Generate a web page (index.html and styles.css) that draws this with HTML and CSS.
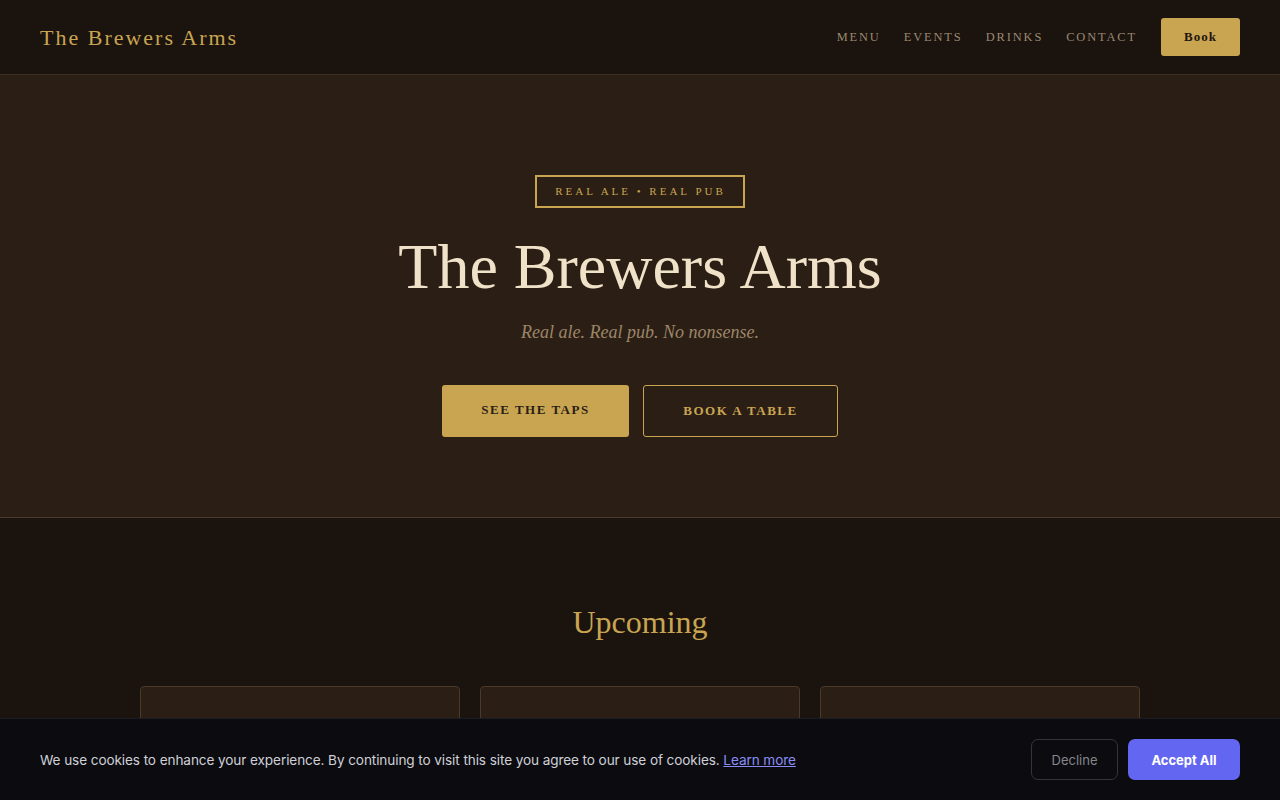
FILE: index.html
```html
<!DOCTYPE html>
<html lang="en">
<head>
<meta charset="utf-8">
<title>The Brewers Arms</title>
<link rel="stylesheet" href="styles.css">
</head>
<body>
<header class="site-header">
  <a class="logo" href="#">The Brewers Arms</a>
  <nav class="nav">
    <a href="#">MENU</a>
    <a href="#">EVENTS</a>
    <a href="#">DRINKS</a>
    <a href="#">CONTACT</a>
    <a class="nav-book" href="#">Book</a>
  </nav>
</header>
<section class="hero">
  <div class="badge">REAL ALE • REAL PUB</div>
  <h1 class="hero-title">The Brewers Arms</h1>
  <p class="hero-sub">Real ale. Real pub. No nonsense.</p>
  <div class="hero-actions">
    <a class="btn btn-solid" href="#">SEE THE TAPS</a>
    <a class="btn btn-outline" href="#">BOOK A TABLE</a>
  </div>
</section>
<section class="upcoming">
  <h2 class="section-title">Upcoming</h2>
  <div class="cards">
    <div class="card"></div>
    <div class="card"></div>
    <div class="card"></div>
  </div>
</section>
<div class="cookie">
  <p class="cookie-text">We use cookies to enhance your experience. By continuing to visit this site you agree to our use of cookies. <a href="#">Learn more</a></p>
  <div class="cookie-actions">
    <button class="c-btn c-decline">Decline</button>
    <button class="c-btn c-accept">Accept All</button>
  </div>
</div>
</body>
</html>
```
FILE: styles.css
```css
* { box-sizing: border-box; }
html, body { margin: 0; padding: 0; }
body {
  background: #1b130e;
  font-family: "Liberation Serif", "Times New Roman", serif;
  color: #f0e2c8;
  min-height: 100vh;
}
a { text-decoration: none; }

.site-header {
  height: 75px;
  display: flex;
  align-items: center;
  justify-content: space-between;
  padding: 0 40px;
  background: #1a130e;
  border-bottom: 1px solid #3b2e22;
}
.logo {
  color: #c9a552;
  font-size: 22px;
  letter-spacing: 2px;
  margin-top: 1px;
}
.nav {
  display: flex;
  align-items: center;
}
.nav a {
  color: #9b8a70;
  font-size: 12.4px;
  letter-spacing: 1.9px;
  margin-left: 23px;
}
.nav a.nav-book {
  margin-left: 24px;
  background: #c9a552;
  color: #1f160e;
  font-weight: bold;
  letter-spacing: 1px;
  font-size: 13px;
  width: 79px;
  height: 38px;
  border-radius: 3px;
  display: flex;
  align-items: center;
  justify-content: center;
}

.hero {
  background: #2b1e15;
  border-bottom: 1px solid #4a3a2a;
  height: 443px;
  display: flex;
  flex-direction: column;
  align-items: center;
  padding-top: 100px;
}
.badge {
  border: 2px solid #c9a552;
  color: #c9a552;
  font-size: 11px;
  letter-spacing: 3px;
  padding: 0 1px 1px 2px;
  width: 210px;
  height: 33px;
  display: flex;
  align-items: center;
  justify-content: center;
}
.hero-title {
  margin: 21px 0 0;
  font-weight: normal;
  font-size: 64px;
  line-height: 76px;
  color: #f0e2c8;
}
.hero-sub {
  margin: 16px 0 0;
  font-style: italic;
  font-size: 18px;
  line-height: 22px;
  color: #9c8668;
}
.hero-actions {
  margin-top: 42px;
  display: flex;
  gap: 14px;
}
.btn {
  height: 52px;
  display: flex;
  align-items: center;
  justify-content: center;
  font-size: 13px;
  font-weight: bold;
  letter-spacing: 1.5px;
  border-radius: 3px;
}
.btn-solid {
  width: 187px;
  background: #c9a552;
  color: #2b1e15;
  padding-bottom: 2px;
}
.btn-outline {
  width: 195px;
  border: 1px solid #c9a552;
  color: #c9a552;
}

.upcoming {
  padding-top: 84px;
  display: flex;
  flex-direction: column;
  align-items: center;
}
.section-title {
  margin: 0;
  font-weight: normal;
  font-size: 32px;
  line-height: 40px;
  color: #c9a552;
}
.cards {
  margin-top: 44px;
  display: grid;
  grid-template-columns: repeat(3, 320px);
  gap: 20px;
}
.card {
  height: 200px;
  background: #2b1e15;
  border: 1px solid #4a3a2a;
  border-radius: 4px;
}

.cookie {
  position: fixed;
  left: 0;
  right: 0;
  bottom: 0;
  height: 82px;
  background: #0c0c10;
  border-top: 1px solid #1c1c24;
  display: flex;
  align-items: center;
  justify-content: space-between;
  padding: 0 40px;
  font-family: Inter, "Noto Sans", sans-serif;
}
.cookie-text {
  margin: 0;
  font-size: 13.6px;
  color: #cfd0d8;
  letter-spacing: -0.1px;
}
.cookie-text a {
  color: #8a8cf5;
  text-decoration: underline;
}
.cookie-actions {
  display: flex;
  gap: 10px;
}
.c-btn {
  font-family: Inter, "Noto Sans", sans-serif;
  font-size: 13px;
  height: 41px;
  border-radius: 7px;
  cursor: pointer;
}
.c-decline {
  width: 87px;
  background: transparent;
  border: 1px solid #34343c;
  color: #85858d;
}
.c-accept {
  width: 112px;
  background: #6366f1;
  border: none;
  color: #ffffff;
  font-weight: bold;
}
```
